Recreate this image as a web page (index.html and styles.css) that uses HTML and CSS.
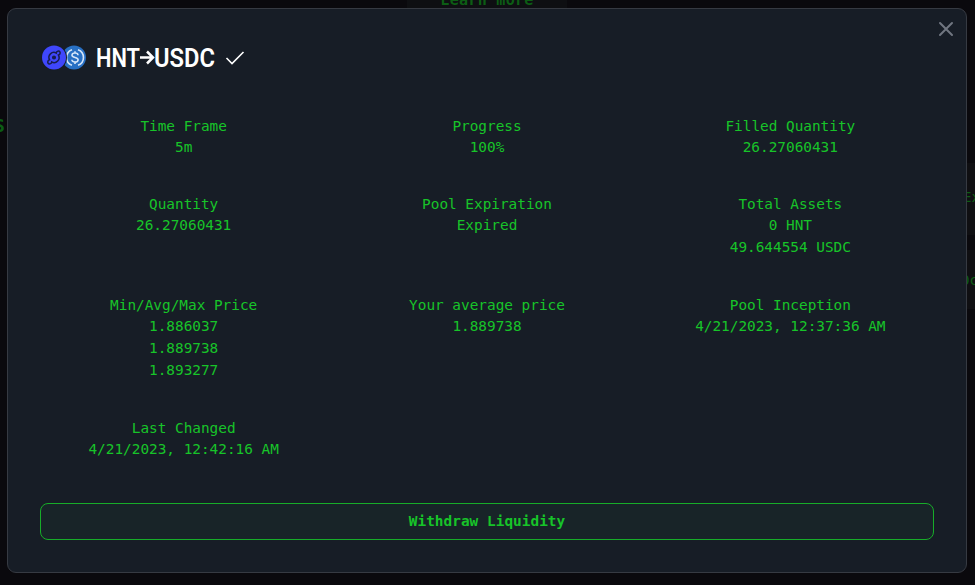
FILE: index.html
```html
<!DOCTYPE html>
<html lang="en">
<head>
<meta charset="utf-8">
<title>HNT to USDC</title>
<link rel="stylesheet" href="styles.css">
</head>
<body>
<div class="backdrop">
  <div class="learn">Learn more</div>
  <div class="peek peek-left">S</div>
  <div class="peek peek-ex">Ex</div>
  <div class="peek peek-oc">Oc</div>
</div>
<main class="modal">
  <button class="close" aria-label="Close">
    <svg width="16" height="16" viewBox="0 0 16 16"><path d="M2 2L14 14M14 2L2 14"/></svg>
  </button>
  <header class="head">
    <svg class="coins" width="46" height="26" viewBox="0 0 46 26">
      <circle cx="33" cy="12.500" r="12" fill="#2870c4"/>
      <g transform="translate(0 -.5)" fill="none" stroke="#d5e5f8" stroke-width="1.6">
        <path d="M31 5.200a8.300 8.300 0 0 0 0 15.600M37 5.200a8.300 8.300 0 0 1 0 15.600"/>
        <path d="M37 10.700c0-1.500-1.300-2.200-3-2.200s-3 .7-3 2.200c0 3.100 6.100 1.500 6.100 4.500 0 1.500-1.300 2.300-3.100 2.300s-3.100-.8-3.100-2.300M34 6.700v1.800M34 17.500v1.900"/>
      </g>
      <circle cx="13" cy="12.500" r="13" fill="#171d26"/>
      <circle cx="13" cy="12.500" r="12" fill="#3f47fb"/>
      <g transform="translate(0 -.5)" fill="none" stroke="#171d4e" stroke-width="1.500" stroke-linecap="round">
        <circle cx="13" cy="13" r="1.300" fill="#171d4e"/>
        <path d="M8.500 15.200a5 5 0 0 1 6.800-6.700c.3-2.200 2.800-2.400 3.600-1.100s-.2 3-1.500 3.200a5 5 0 0 1-6.700 6.900c-.3 2.100-2.700 2.500-3.600 1.200s0-3.100 1.400-3.500z"/>
      </g>
    </svg>
    <svg class="title" width="120" height="30" viewBox="0 0 120 30">
      <text x="0" y="24" textLength="44" lengthAdjust="spacingAndGlyphs">HNT</text>
      <path d="M44 14.500H56.500M51 8.500L57 14.500L51 20.500"/>
      <text x="58" y="24" textLength="61" lengthAdjust="spacingAndGlyphs">USDC</text>
    </svg>
    <svg class="check" width="20" height="16" viewBox="0 0 20 16"><path d="M1.500 8L7 13.500L18.500 2"/></svg>
  </header>
  <section class="grid">
    <div><h2>Time Frame</h2><p>5m</p></div>
    <div><h2>Progress</h2><p>100%</p></div>
    <div><h2>Filled Quantity</h2><p>26.27060431</p></div>
    <div><h2>Quantity</h2><p>26.27060431</p></div>
    <div><h2>Pool Expiration</h2><p>Expired</p></div>
    <div><h2>Total Assets</h2><p>0 HNT</p><p>49.644554 USDC</p></div>
    <div><h2>Min/Avg/Max Price</h2><p>1.886037</p><p>1.889738</p><p>1.893277</p></div>
    <div><h2>Your average price</h2><p>1.889738</p></div>
    <div><h2>Pool Inception</h2><p>4/21/2023, 12:37:36 AM</p></div>
    <div><h2>Last Changed</h2><p>4/21/2023, 12:42:16 AM</p></div>
  </section>
  <button class="withdraw">Withdraw Liquidity</button>
</main>
</body>
</html>
```
FILE: styles.css
```css
* { box-sizing: border-box; }
body {
  margin: 0;
  width: 975px;
  height: 585px;
  overflow: hidden;
  position: relative;
  background: #0a090d;
  font-family: "DejaVu Sans Mono", monospace;
  color: #17c429;
}
.backdrop { position: absolute; inset: 0; overflow: hidden; color: #0c5d14; }
.learn {
  position: absolute;
  left: 407px;
  top: -10px;
  width: 160px;
  height: 20px;
  background: #0e0f12;
  text-align: center;
  font-size: 15px;
  line-height: 20px;
  letter-spacing: .3px;
  font-weight: bold;
}
.peek { position: absolute; font-size: 14px; line-height: 20px; }
.peek-left { left: -6px; top: 116px; font-size: 18px; font-weight: bold; }
.peek-ex, .peek-oc { left: 963px; padding: 24px 0 28px; width: 12px; background: #0f0f12; white-space: nowrap; font-size: 14px; }
.peek-ex { top: 163px; }
.peek-oc { top: 250px; height: 59px; padding-top: 20px; left: 961px; width: 14px; }
.modal {
  position: relative;
  margin: 8px 0 0 7px;
  width: 960px;
  height: 565px;
  padding: 36px 32px 0;
  background: #171d26;
  border: 1px solid #363a42;
  border-radius: 9px;
}
.close {
  position: absolute;
  right: 12px;
  top: 12px;
  width: 16px;
  height: 16px;
  padding: 0;
  border: 0;
  background: none;
}
.close svg { display: block; }
.close path { fill: none; stroke: #707680; stroke-width: 2; stroke-linecap: round; }
.head { display: flex; align-items: center; height: 26px; }
.coins { margin-left: 1px; flex: none; }
.title { margin-left: 9px; flex: none; }
.title text { font: 600 25px Roboto, sans-serif; fill: #fff; }
.title path { fill: none; stroke: #fff; stroke-width: 2.500; }
.check { margin-left: 9px; }
.check path { fill: none; stroke: #fff; stroke-width: 1.600; }
.grid {
  display: grid;
  grid-template-columns: repeat(3, 1fr);
  grid-template-rows: 42px 65px 87px 42px;
  column-gap: 16px;
  row-gap: 36px;
  margin-top: 45px;
  text-align: center;
  font-size: 14.400px;
  letter-spacing: -.01px;
}
h2 { margin: 0; font-size: inherit; font-weight: 400; line-height: 20px; }
p { margin: 0; line-height: 22px; }
.withdraw {
  display: block;
  width: 894px;
  height: 37px;
  margin-top: 43px;
  padding: 0 0 2px;
  border: 1px solid #17ad29;
  border-radius: 8px;
  background: #182428;
  color: inherit;
  font: bold 14.400px "DejaVu Sans Mono", monospace;
  letter-spacing: .03px;
}
```
